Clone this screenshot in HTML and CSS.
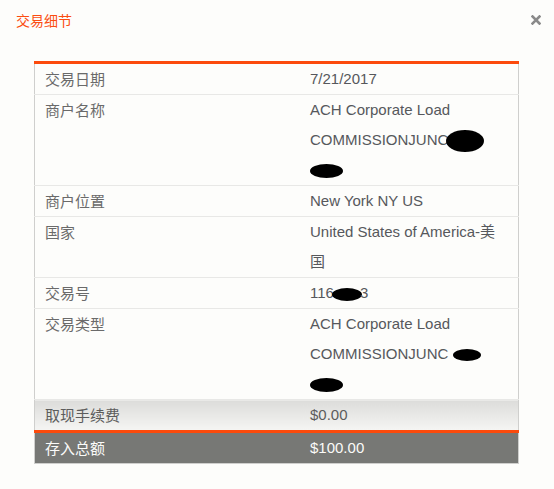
FILE: index.html
```html
<!DOCTYPE html>
<html lang="zh">
<head>
<meta charset="utf-8">
<link rel="stylesheet" href="styles.css">
</head>
<body>
<div class="dialog">
  <div class="header">
    <div class="title">交易细节</div>
    <div class="close"><svg width="10" height="10" viewBox="0 0 10 10"><path d="M1.5 1.5 L8.5 8.5 M8.5 1.5 L1.5 8.5" stroke="#8a8a8a" stroke-width="2.6" stroke-linecap="square"/></svg></div>
  </div>
  <table class="detail">
    <tr><td class="label">交易日期</td><td class="value">7/21/2017</td></tr>
    <tr><td class="label">商户名称</td><td class="value">ACH Corporate Load<br>COMMISSIONJUNC<span class="blob b1"></span><br><span class="blob b2"></span></td></tr>
    <tr><td class="label">商户位置</td><td class="value">New York NY US</td></tr>
    <tr><td class="label">国家</td><td class="value">United States of America-美<br>国</td></tr>
    <tr><td class="label">交易号</td><td class="value">116<span class="blob b3"></span>3</td></tr>
    <tr><td class="label">交易类型</td><td class="value">ACH Corporate Load<br>COMMISSIONJUNC <span class="blob b4"></span><br><span class="blob b5"></span></td></tr>
    <tr class="fee"><td class="label">取现手续费</td><td class="value">$0.00</td></tr>
    <tr class="total"><td class="label">存入总额</td><td class="value">$100.00</td></tr>
  </table>
</div>
</body>
</html>
```

FILE: styles.css
```css
html, body {
  margin: 0;
  background: #fdfdfb;
}
.dialog {
  width: 554px;
}
.header {
  display: flex;
  justify-content: space-between;
  align-items: center;
  padding: 10px 13px 0 16px;
  height: 20px;
}
.title {
  font-family: "Noto Sans CJK SC", sans-serif;
  font-size: 14px;
  line-height: 20px;
  color: #fb4d12;
}
.close {
  display: flex;
  width: 10px;
  height: 10px;
}
.detail {
  margin: 31px 0 0 34px;
  width: 485px;
  border-collapse: collapse;
  border: 1px solid #cfcfcd;
  border-top: 3px solid #fc4a0c;
  background: #fdfdfb;
  table-layout: fixed;
}
.detail td {
  padding: 0 10px;
  line-height: 30px;
  font-size: 15px;
  vertical-align: top;
  border-bottom: 1px solid #e8e8e6;
}
.label {
  width: 245px;
  font-family: "Noto Sans CJK SC", sans-serif;
  color: #6a6a6a;
}
.value {
  font-family: "Liberation Sans", "Noto Sans CJK SC", sans-serif;
  color: #56585c;
}
.blob {
  display: inline-block;
  background: #000;
  vertical-align: middle;
  border-radius: 50%;
}
.b1 { width: 38px; height: 22px; margin-left: -2px; }
.b2 { width: 33px; height: 14px; }
.b3 { width: 30px; height: 13px; margin: 0 -2px; }
.b4 { width: 28px; height: 12px; }
.b5 { width: 33px; height: 14px; }
.fee td {
  background: linear-gradient(#dcdcda, #f5f5f3);
  border-bottom: none;
  color: #5c5c5c;
}
.total td {
  background: #777875;
  color: #fbfbf9;
  border-top: 3px solid #fc4a0c;
  border-bottom: none;
}
```
